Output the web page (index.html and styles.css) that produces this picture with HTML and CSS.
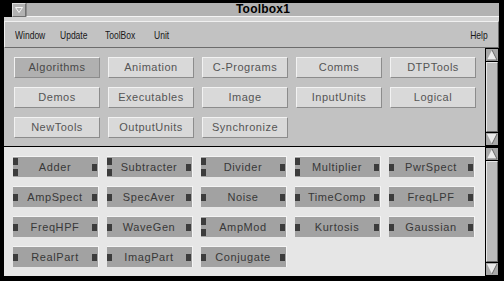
FILE: index.html
```html
<!DOCTYPE html>
<html>
<head>
<meta charset="utf-8">
<link rel="stylesheet" href="styles.css">
</head>
<body>
<div class="win">
  <div class="titlebar">
    <div class="minbtn">
      <svg width="8" height="6" viewBox="0 0 8 6"><polygon points="0.5,0.5 7.5,0.5 4,5.5" fill="none" stroke="#f4f4f4" stroke-width="1"/></svg>
    </div>
    <div class="title">Toolbox1</div>
  </div>
  <div class="menuwrap">
    <div class="menubar">
      <span class="mi">Window</span>
      <span class="mi">Update</span>
      <span class="mi wide">ToolBox</span>
      <span class="mi">Unit</span>
      <span class="mi help">Help</span>
    </div>
  </div>
  <div class="pane top">
    <div class="content">
      <div class="tools">
        <div class="tool sel">Algorithms</div>
        <div class="tool">Animation</div>
        <div class="tool">C-Programs</div>
        <div class="tool">Comms</div>
        <div class="tool">DTPTools</div>
        <div class="tool">Demos</div>
        <div class="tool">Executables</div>
        <div class="tool">Image</div>
        <div class="tool">InputUnits</div>
        <div class="tool">Logical</div>
        <div class="tool">NewTools</div>
        <div class="tool">OutputUnits</div>
        <div class="tool">Synchronize</div>
      </div>
    </div>
    <div class="scroll">
      <div class="arrow"><svg width="12" height="12" viewBox="0 0 12 12"><polygon points="6,1 11,11 1,11" fill="#ececec"/><polyline points="6,1 11,11 1,11" fill="none" stroke="#6a6a6a" stroke-width="1"/></svg></div>
      <div class="slider"></div>
      <div class="arrow"><svg width="12" height="12" viewBox="0 0 12 12"><polygon points="1,1 11,1 6,11" fill="#ececec"/><polyline points="11,1 6,11" fill="none" stroke="#6a6a6a" stroke-width="1"/></svg></div>
    </div>
  </div>
  <div class="pane bottom">
    <div class="content">
      <div class="mods">
        <div class="mod"><div class="ports"><i></i><i></i></div><span>Adder</span><div class="ports"><i></i></div></div>
        <div class="mod"><div class="ports"><i></i><i></i></div><span>Subtracter</span><div class="ports"><i></i></div></div>
        <div class="mod"><div class="ports"><i></i><i></i></div><span>Divider</span><div class="ports"><i></i></div></div>
        <div class="mod"><div class="ports"><i></i><i></i></div><span>Multiplier</span><div class="ports"><i></i></div></div>
        <div class="mod"><div class="ports"><i></i></div><span>PwrSpect</span><div class="ports"><i></i></div></div>
        <div class="mod"><div class="ports"><i></i></div><span>AmpSpect</span><div class="ports"><i></i></div></div>
        <div class="mod"><div class="ports"><i></i></div><span>SpecAver</span><div class="ports"><i></i></div></div>
        <div class="mod"><div class="ports"><i></i></div><span>Noise</span><div class="ports"><i></i></div></div>
        <div class="mod"><div class="ports"><i></i></div><span>TimeComp</span><div class="ports"><i></i></div></div>
        <div class="mod"><div class="ports"><i></i></div><span>FreqLPF</span><div class="ports"><i></i></div></div>
        <div class="mod"><div class="ports"><i></i></div><span>FreqHPF</span><div class="ports"><i></i></div></div>
        <div class="mod"><div class="ports"><i></i></div><span>WaveGen</span><div class="ports"><i></i></div></div>
        <div class="mod"><div class="ports"><i></i><i></i></div><span>AmpMod</span><div class="ports"><i></i></div></div>
        <div class="mod"><div class="ports"><i></i></div><span>Kurtosis</span><div class="ports"><i></i></div></div>
        <div class="mod"><div class="ports"><i></i></div><span>Gaussian</span><div class="ports"><i></i></div></div>
        <div class="mod"><div class="ports"><i></i></div><span>RealPart</span><div class="ports"><i></i></div></div>
        <div class="mod"><div class="ports"><i></i></div><span>ImagPart</span><div class="ports"><i></i></div></div>
        <div class="mod"><div class="ports"><i></i></div><span>Conjugate</span><div class="ports"><i></i></div></div>
      </div>
    </div>
    <div class="scroll">
      <div class="arrow"><svg width="12" height="12" viewBox="0 0 12 12"><polygon points="6,1 11,11 1,11" fill="#ececec"/><polyline points="6,1 11,11 1,11" fill="none" stroke="#6a6a6a" stroke-width="1"/></svg></div>
      <div class="slider"></div>
      <div class="arrow"><svg width="12" height="12" viewBox="0 0 12 12"><polygon points="1,1 11,1 6,11" fill="#ececec"/><polyline points="11,1 6,11" fill="none" stroke="#6a6a6a" stroke-width="1"/></svg></div>
    </div>
  </div>
</div>
</body>
</html>
```
FILE: styles.css
```css
* { box-sizing: border-box; }
html, body { margin: 0; padding: 0; }
body {
  width: 504px;
  height: 281px;
  overflow: hidden;
  background: #000;
  font-family: "Liberation Sans", Arial, sans-serif;
}
.win {
  width: 504px;
  height: 281px;
  display: flex;
  flex-direction: column;
}
.titlebar {
  height: 17px;
  padding: 3px 5px 0 12px;
  display: flex;
}
.minbtn {
  width: 14px;
  height: 14px;
  background: #b2b2b2;
  border-top: 1px solid #dcdcdc;
  border-left: 1px solid #dcdcdc;
  border-right: 1px solid #707070;
  border-bottom: 1px solid #707070;
  display: flex;
  align-items: center;
  justify-content: center;
}
.title {
  flex: 1;
  background: #b2b2b2;
  border-bottom: 1px solid #f4f4f4;
  border-left: 1px solid #8a8a8a;
  font-weight: bold;
  font-size: 12px;
  line-height: 13px;
  text-align: center;
  color: #000;
  letter-spacing: 0.2px;
}
.menuwrap {
  height: 31px;
  margin: 0 5px 0 4px;
  background: #d4d4d4;
  padding-top: 4px;
}
.menubar {
  height: 27px;
  background: #c2c2c2;
  border-top: 1px solid #f0f0f0;
  border-left: 1px solid #f0f0f0;
  border-bottom: 1px solid #6c6c6c;
  border-right: 1px solid #6c6c6c;
  display: flex;
  align-items: center;
  padding-left: 10px;
  padding-right: 10px;
}
.mi {
  display: inline-block;
  width: 45px;
  font-size: 11.5px;
  color: #181818;
  transform: scaleX(0.74);
  transform-origin: left center;
  white-space: nowrap;
}
.mi.wide { width: 49px; }
.mi.help { margin-left: auto; width: auto; transform-origin: right center; }
.pane {
  display: flex;
  margin: 0 5px 0 4px;
}
.pane.top {
  height: 98px;
  background: #c2c2c2;
}
.pane.bottom {
  height: 129px;
  margin-top: 1px;
  background: #e6e6e6;
}
.content { flex: 1; }
.pane.top .content { padding: 9px 0 0 10px; }
.pane.bottom .content { padding: 9px 0 0 9px; }
.tools, .mods {
  display: grid;
  grid-template-columns: repeat(5, 86px);
  column-gap: 8px;
  row-gap: 9px;
}
.tool {
  height: 21px;
  background: #d9d9d9;
  border-top: 1px solid #f2f2f2;
  border-left: 1px solid #f2f2f2;
  border-right: 1px solid #8c8c8c;
  border-bottom: 1px solid #8c8c8c;
  font-size: 11px;
  letter-spacing: 0.5px;
  color: #555;
  text-align: center;
  line-height: 19px;
}
.tool.sel { background: #b0b0b0; color: #484848; }
.mod {
  height: 21px;
  background: #a2a2a2;
  border-top: 1px solid #f4f4f4;
  border-right: 1px solid #f4f4f4;
  display: flex;
  align-items: center;
  padding-right: 1px;
}
.mod span {
  flex: 1;
  text-align: center;
  font-size: 11px;
  letter-spacing: 0.6px;
  color: #383838;
}
.ports {
  display: flex;
  flex-direction: column;
  gap: 4px;
}
.ports i {
  display: block;
  width: 5px;
  height: 7px;
  background: #3c3c3c;
}
.scroll {
  width: 14px;
  background: #000;
  padding: 1px;
  display: flex;
  flex-direction: column;
}
.arrow {
  height: 12px;
  background: #a8a8a8;
  display: flex;
  align-items: center;
  justify-content: center;
}
.slider {
  flex: 1;
  margin: 1px 0;
  background: #bcbcbc;
  border-top: 1px solid #e8e8e8;
  border-left: 1px solid #e8e8e8;
  border-right: 1px solid #6c6c6c;
  border-bottom: 1px solid #6c6c6c;
}
```
